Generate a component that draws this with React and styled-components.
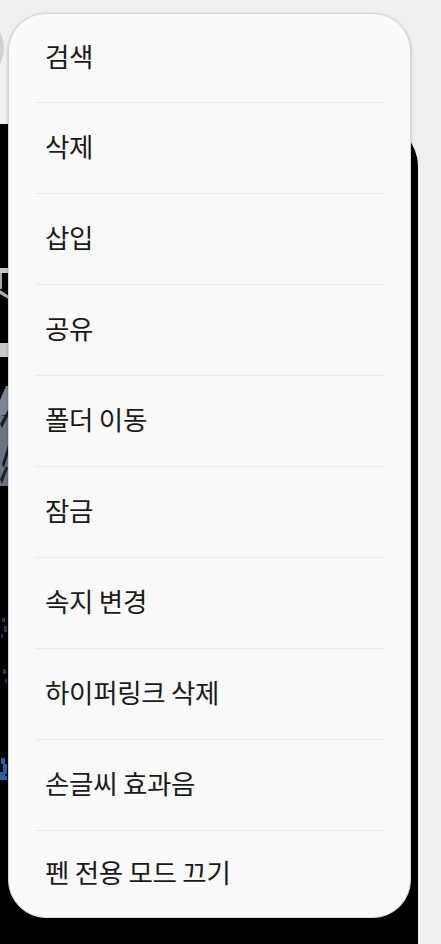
import React from "react";
import styled, { createGlobalStyle } from "styled-components";

const Global = createGlobalStyle`
  html, body { margin: 0; padding: 0; background: #efefef; }
  body { font-family: "Noto Sans CJK KR", "Noto Sans", sans-serif; overflow: hidden; }
  #root { width: 441px; height: 944px; }
`;

const Screen = styled.div`
  position: relative;
  width: 441px;
  height: 944px;
  background: #efefef;
  display: flex;
  flex-direction: column;
  overflow: hidden;
`;

const Canvas = styled.div`
  position: relative;
  margin-top: 124px;
  width: 418px;
  flex: 1;
  background: #000;
  border-top-right-radius: 42px;
  overflow: hidden;
`;

const Art = styled.svg`
  position: absolute;
  left: 0;
  top: 0;
  display: block;
`;

const RoundButton = styled.div`
  position: absolute;
  left: -64px;
  top: 14px;
  width: 68px;
  height: 68px;
  border-radius: 50%;
  background: #d2d2d2;
`;

const Menu = styled.ul`
  position: absolute;
  left: 8px;
  top: 13px;
  width: 403px;
  height: 905px;
  box-sizing: border-box;
  margin: 0;
  padding: 0;
  list-style: none;
  background: #fafafa;
  border: 1px solid #d6d6d6;
  border-radius: 38px;
  box-shadow: 0 1px 3px rgba(0, 0, 0, 0.25);
  display: flex;
  flex-direction: column;
  overflow: hidden;
`;

const Item = styled.li`
  height: 90px;
  flex: none;
  display: flex;
  align-items: center;
  padding-left: 36px;
  font-size: 26.5px;
  font-weight: 400;
  line-height: 1;
  color: #1a1a1a;
  letter-spacing: -0.3px;
  &:first-child { height: 88px; }
  &:last-child { height: 86px; }
`;

const Label = styled.span`
  display: block;
  transform: translateY(-2px);
`;

const Divider = styled.li`
  height: 1px;
  flex: none;
  margin: 0 26px;
  background: #ececec;
`;

const items = [
  "검색",
  "삭제",
  "삽입",
  "공유",
  "폴더 이동",
  "잠금",
  "속지 변경",
  "하이퍼링크 삭제",
  "손글씨 효과음",
  "펜 전용 모드 끄기",
];

export default function App() {
  return (
    <Screen>
      <Global />
      <RoundButton />
      <Canvas>
        <Art width="20" height="820" viewBox="0 0 20 820">
          <rect x="0" y="144" width="12" height="5" fill="#c8c8c8" />
          <rect x="0" y="149" width="2" height="16" fill="#a8a8a8" />
          <path d="M0 166 L12 174 L12 177 L0 170 Z" fill="#b4b4b4" />
          <rect x="0" y="219" width="12" height="14" fill="#c8c8c8" />
          <path d="M0 276 L6 262 L12 262 L12 290 L0 292 Z" fill="#7c8596" />
          <rect x="0" y="292" width="12" height="70" fill="#6b7282" />
          <path d="M0 300 L8 286 L10 288 L2 304 Z" fill="#1a1d24" />
          <path d="M2 340 L9 318 L11 320 L4 344 Z" fill="#1a1d24" />
          <path d="M0 355 L6 342 L8 344 L2 360 Z" fill="#20242c" />
          <g fill="#214a80" opacity="0.8">
            <rect x="2" y="494" width="3" height="4" />
            <rect x="4" y="502" width="3" height="6" />
            <rect x="1" y="510" width="2" height="4" />
            <rect x="3" y="545" width="3" height="5" />
            <rect x="5" y="555" width="2" height="4" />
          </g>
          <g fill="#2b5fa5">
            <rect x="1" y="634" width="4" height="6" />
            <rect x="3" y="640" width="4" height="10" />
            <rect x="0" y="648" width="5" height="8" />
            <rect x="4" y="652" width="3" height="4" />
          </g>
        </Art>
      </Canvas>
      <Menu>
        {items.map((label, i) => (
          <React.Fragment key={label}>
            {i > 0 && <Divider />}
            <Item>
              <Label>{label}</Label>
            </Item>
          </React.Fragment>
        ))}
      </Menu>
    </Screen>
  );
}
